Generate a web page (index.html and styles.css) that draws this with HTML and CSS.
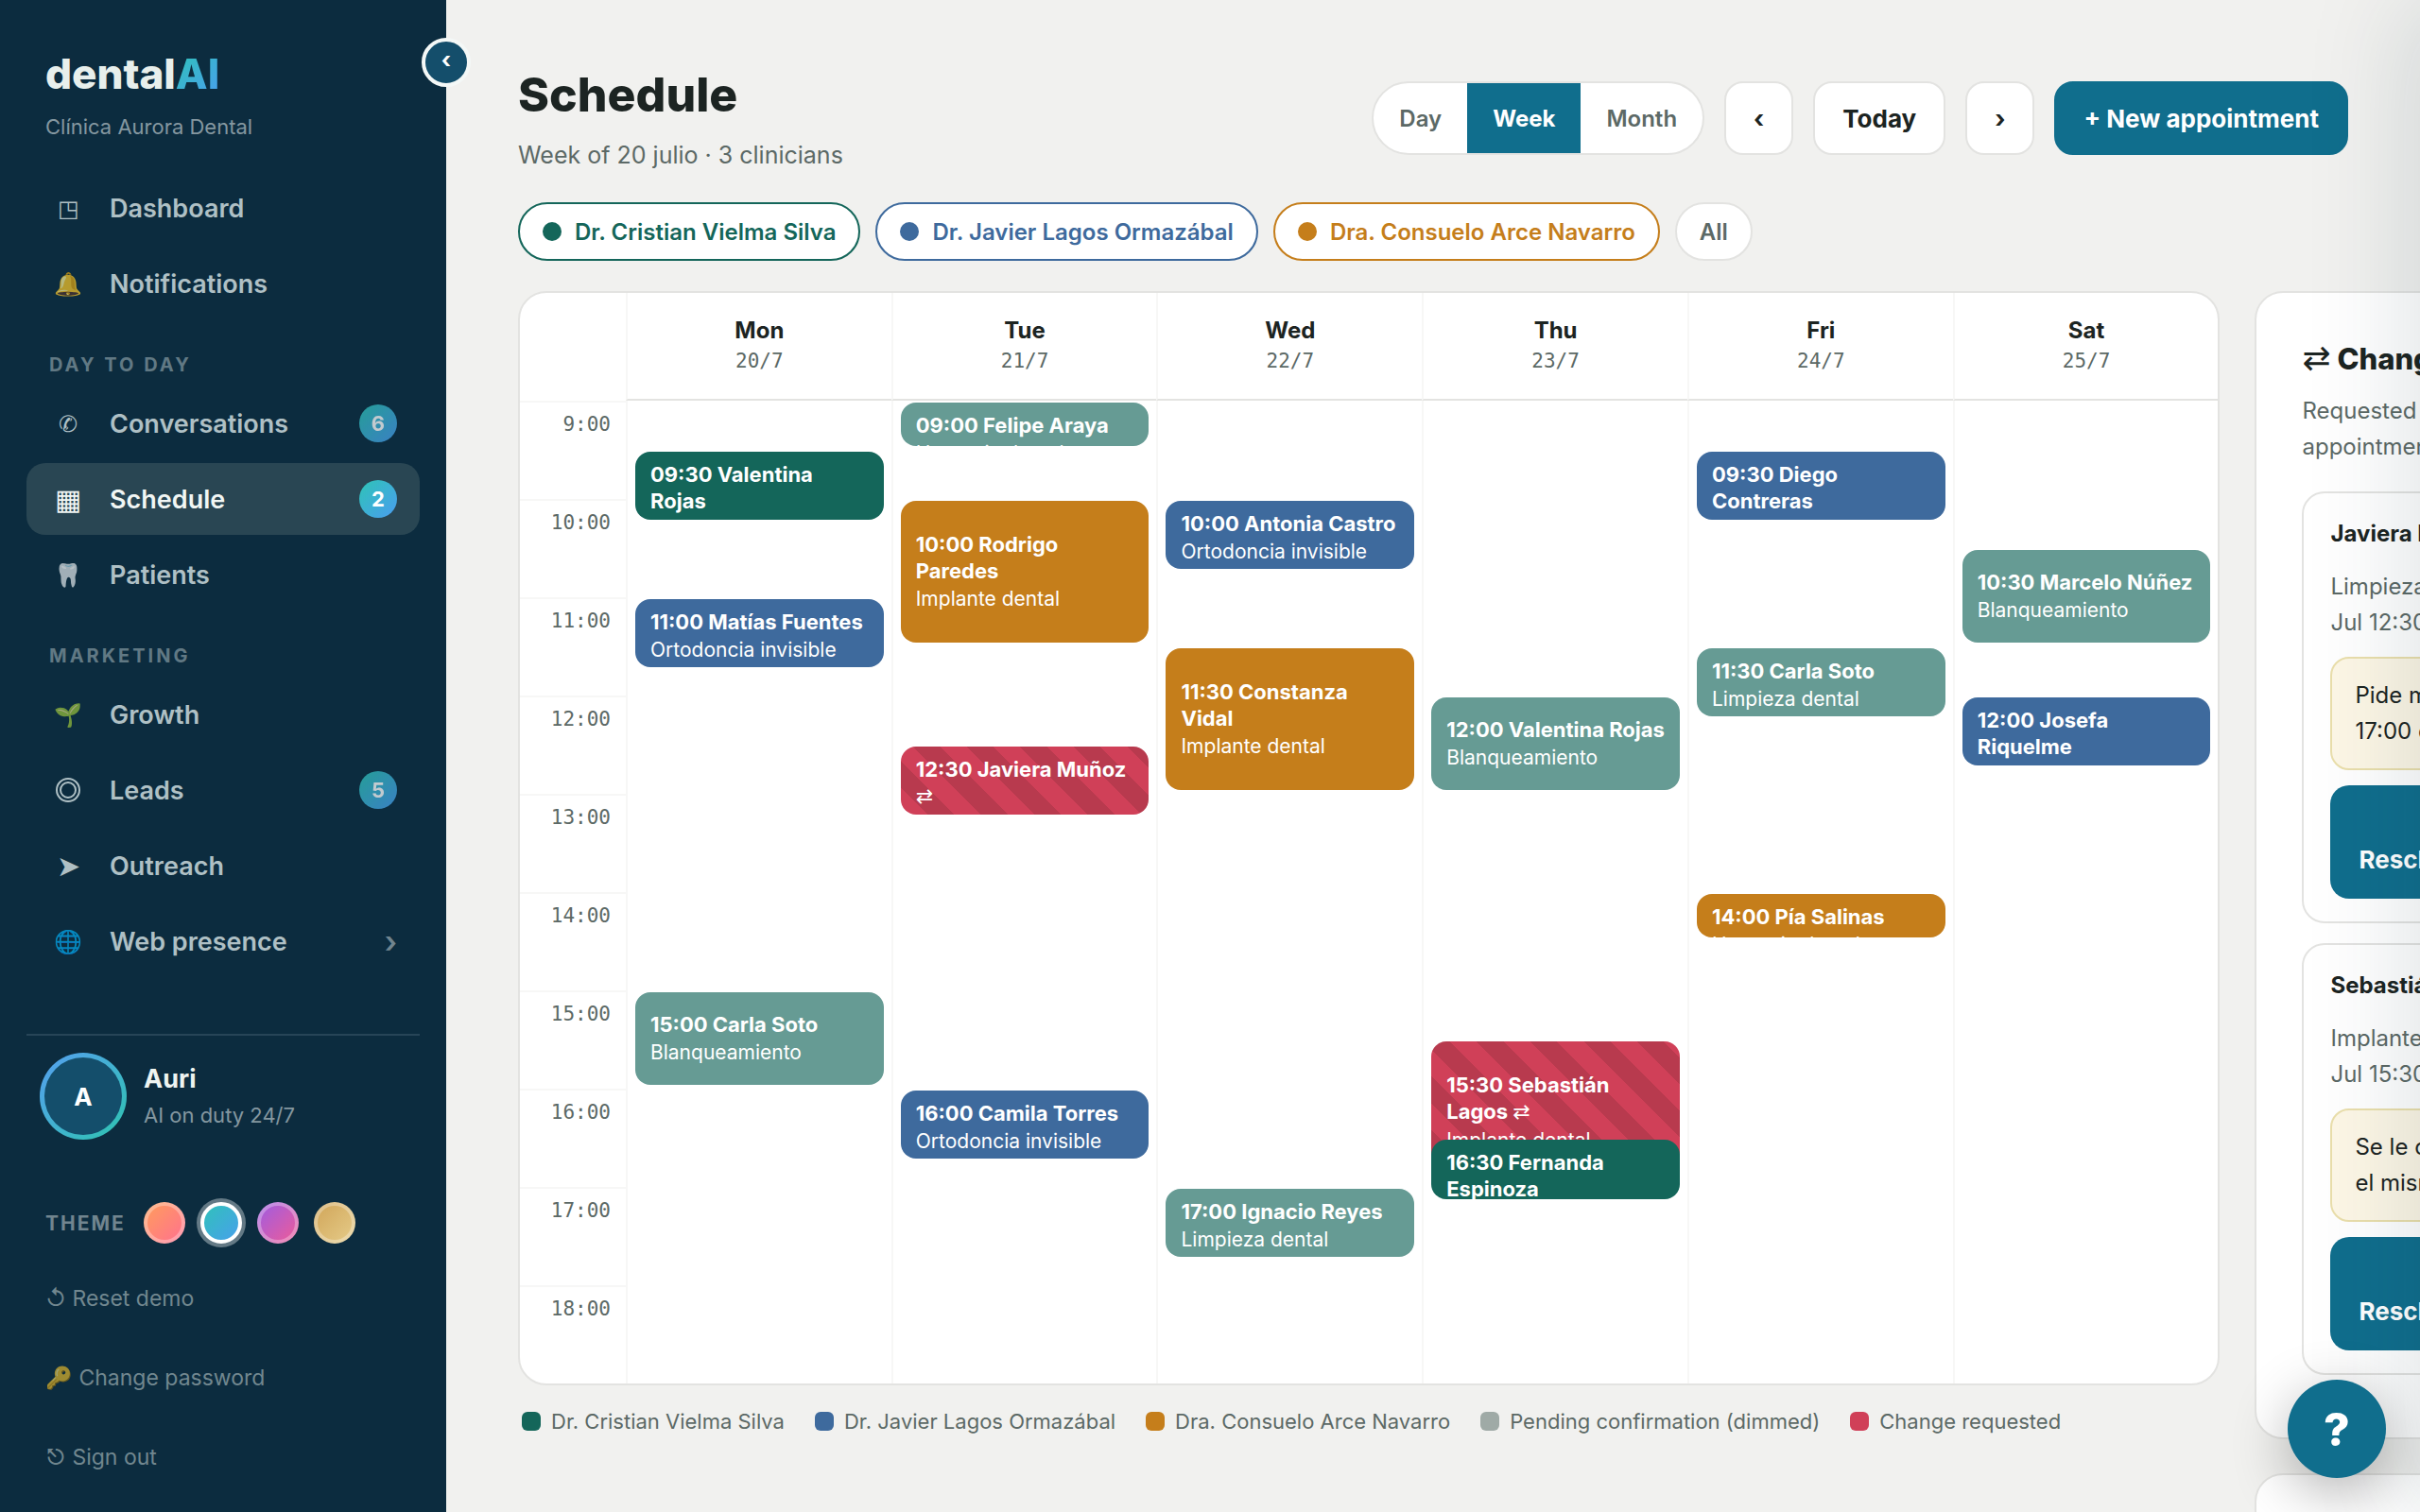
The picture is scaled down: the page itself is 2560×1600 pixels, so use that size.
FILE: index.html
```html
<!DOCTYPE html>
<html lang="en">
  <head>
    <meta charset="UTF-8" />
    <meta name="viewport" content="width=device-width, initial-scale=1.0" />
    <title>dentalAI - Schedule</title>
    <link rel="stylesheet" href="styles.css">
  </head>
  <body>
    <aside class="sidebar">
      <button class="collapse" type="button" aria-label="Collapse menu">‹</button>
      <div class="brand">dental<span>AI</span></div>
      <div class="clinic">Clínica Aurora Dental</div>

      <nav class="nav">
        <a class="nav-item" href="#"><span class="icon">◳</span>Dashboard</a>
        <a class="nav-item" href="#"><span class="icon emoji">🔔</span>Notifications</a>
        <div class="nav-label">Day to day</div>
        <a class="nav-item" href="#"><span class="icon">✆</span>Conversations<span class="badge">6</span></a>
        <a class="nav-item active" href="#"><span class="icon large">▦</span>Schedule<span class="badge">2</span></a>
        <a class="nav-item" href="#"><span class="icon emoji">🦷</span>Patients</a>
        <div class="nav-label">Marketing</div>
        <a class="nav-item" href="#"><span class="icon emoji">🌱</span>Growth</a>
        <a class="nav-item" href="#">
          <span class="icon">
            <svg width="28" height="28" viewBox="0 0 28 28" fill="none" stroke="currentColor" stroke-width="2">
              <circle cx="14" cy="14" r="12" />
              <circle cx="14" cy="14" r="8" />
            </svg>
          </span>Leads<span class="badge">5</span>
        </a>
        <a class="nav-item" href="#"><span class="icon large">➤</span>Outreach</a>
        <a class="nav-item" href="#"><span class="icon emoji">🌐</span>Web presence<span class="chevron">›</span></a>
      </nav>

      <div class="sidebar-footer">
        <div class="profile">
          <div class="avatar"><span>A</span></div>
          <div>
            <div class="profile-name">Auri</div>
            <div class="profile-status">AI on duty 24/7</div>
          </div>
        </div>
        <div class="themes">
          <span class="themes-label">Theme</span>
          <button class="swatch coral" type="button" aria-label="Coral"></button>
          <button class="swatch ocean selected" type="button" aria-label="Ocean"></button>
          <button class="swatch violet" type="button" aria-label="Violet"></button>
          <button class="swatch gold" type="button" aria-label="Gold"></button>
        </div>
        <a class="foot-link" href="#">↺ Reset demo</a>
        <a class="foot-link" href="#"><span class="key">🔑</span> Change password</a>
        <a class="foot-link" href="#">⎋ Sign out</a>
      </div>
    </aside>

    <main class="main">
      <header class="page-head">
        <div>
          <h1>Schedule</h1>
          <p class="subtitle">Week of 20 julio · 3 clinicians</p>
        </div>
        <div class="controls">
          <div class="segmented">
            <button type="button">Day</button>
            <button type="button" class="on">Week</button>
            <button type="button">Month</button>
          </div>
          <button class="btn" type="button" aria-label="Previous week">‹</button>
          <button class="btn" type="button">Today</button>
          <button class="btn" type="button" aria-label="Next week">›</button>
          <button class="btn primary" type="button">+ New appointment</button>
        </div>
      </header>

      <div class="filters">
        <button class="chip green" type="button"><i></i>Dr. Cristian Vielma Silva</button>
        <button class="chip blue" type="button"><i></i>Dr. Javier Lagos Ormazábal</button>
        <button class="chip orange" type="button"><i></i>Dra. Consuelo Arce Navarro</button>
        <button class="chip" type="button">All</button>
      </div>

      <div class="board">
        <section class="board-main">
          <div class="calendar">
            <div class="cal-row">
              <div></div>
              <div class="day-head"><b>Mon</b><span>20/7</span></div>
              <div class="day-head"><b>Tue</b><span>21/7</span></div>
              <div class="day-head"><b>Wed</b><span>22/7</span></div>
              <div class="day-head"><b>Thu</b><span>23/7</span></div>
              <div class="day-head"><b>Fri</b><span>24/7</span></div>
              <div class="day-head"><b>Sat</b><span>25/7</span></div>
            </div>
            <div class="cal-row">
              <div class="hours">
                <div>9:00</div>
                <div>10:00</div>
                <div>11:00</div>
                <div>12:00</div>
                <div>13:00</div>
                <div>14:00</div>
                <div>15:00</div>
                <div>16:00</div>
                <div>17:00</div>
                <div>18:00</div>
              </div>

              <!-- --start: five-minute line counted from 9:00, --len: five-minute steps -->
              <div class="day">
                <button class="event green" type="button" style="--start: 7; --len: 9"><b>09:30 Valentina Rojas</b><span>Limpieza dental</span></button>
                <button class="event blue" type="button" style="--start: 25; --len: 9"><b>11:00 Matías Fuentes</b><span>Ortodoncia invisible</span></button>
                <button class="event pending" type="button" style="--start: 73; --len: 12"><b>15:00 Carla Soto</b><span>Blanqueamiento</span></button>
              </div>
              <div class="day">
                <button class="event pending" type="button" style="--start: 1; --len: 6"><b>09:00 Felipe Araya</b><span>Urgencia dental</span></button>
                <button class="event orange" type="button" style="--start: 13; --len: 18"><b>10:00 Rodrigo Paredes</b><span>Implante dental</span></button>
                <button class="event change" type="button" style="--start: 43; --len: 9"><b>12:30 Javiera Muñoz <em>⇄</em></b><span>Limpieza dental</span></button>
                <button class="event blue" type="button" style="--start: 85; --len: 9"><b>16:00 Camila Torres</b><span>Ortodoncia invisible</span></button>
              </div>
              <div class="day">
                <button class="event blue" type="button" style="--start: 13; --len: 9"><b>10:00 Antonia Castro</b><span>Ortodoncia invisible</span></button>
                <button class="event orange" type="button" style="--start: 31; --len: 18"><b>11:30 Constanza Vidal</b><span>Implante dental</span></button>
                <button class="event pending" type="button" style="--start: 97; --len: 9"><b>17:00 Ignacio Reyes</b><span>Limpieza dental</span></button>
              </div>
              <div class="day">
                <button class="event pending" type="button" style="--start: 37; --len: 12"><b>12:00 Valentina Rojas</b><span>Blanqueamiento</span></button>
                <button class="event change" type="button" style="--start: 79; --len: 18"><b>15:30 Sebastián Lagos <em>⇄</em></b><span>Implante dental</span></button>
                <button class="event green" type="button" style="--start: 91; --len: 8"><b>16:30 Fernanda Espinoza</b><span>Control</span></button>
              </div>
              <div class="day">
                <button class="event blue" type="button" style="--start: 7; --len: 9"><b>09:30 Diego Contreras</b><span>Ortodoncia invisible</span></button>
                <button class="event pending" type="button" style="--start: 31; --len: 9"><b>11:30 Carla Soto</b><span>Limpieza dental</span></button>
                <button class="event orange" type="button" style="--start: 61; --len: 6"><b>14:00 Pía Salinas</b><span>Urgencia dental</span></button>
              </div>
              <div class="day">
                <button class="event pending" type="button" style="--start: 19; --len: 12"><b>10:30 Marcelo Núñez</b><span>Blanqueamiento</span></button>
                <button class="event blue" type="button" style="--start: 37; --len: 9"><b>12:00 Josefa Riquelme</b><span>Ortodoncia invisible</span></button>
              </div>
            </div>
          </div>
          <div class="legend">
            <span class="green"><i></i>Dr. Cristian Vielma Silva</span>
            <span class="blue"><i></i>Dr. Javier Lagos Ormazábal</span>
            <span class="orange"><i></i>Dra. Consuelo Arce Navarro</span>
            <span class="dimmed"><i></i>Pending confirmation (dimmed)</span>
            <span class="red"><i></i>Change requested</span>
          </div>
        </section>

        <aside class="side">
          <section class="panel">
            <h2><em>⇄</em> Changes</h2>
            <p class="panel-intro">Requested by patients for appointments this week.</p>
            <article class="request">
              <h3>Javiera Muñoz</h3>
              <p>Limpieza dental · 21<br>Jul 12:30</p>
              <p class="note">Pide mover a las<br>17:00 del jueves</p>
              <button class="request-btn" type="button">✓<br>Reschedule</button>
            </article>
            <article class="request">
              <h3>Sebastián Lagos</h3>
              <p>Implante dental · 23<br>Jul 15:30</p>
              <p class="note">Se le complica,<br>el mismo día</p>
              <button class="request-btn" type="button">✓<br>Reschedule</button>
            </article>
          </section>
          <section class="panel"></section>
        </aside>
      </div>
    </main>

    <div class="drawer"></div>
    <button class="help" type="button" aria-label="Help">?</button>
  </body>
</html>
```
FILE: styles.css
```css
:root {
  --navy: #0c2c3f;
  --accent: #106e8d;
  --ink: #1c2422;
  --muted: #5c6966;
  --line: #e3e3e1;
  --hair: #f7f7f6;
  --page: #f1f1ef;
  --green: #14665a;
  --blue: #3e6a9d;
  --orange: #c57e1b;
  --pending: #669b94;
  --red: #d04058;
  --tide: linear-gradient(135deg, #2ec4b6, #4a9df0);
}

* {
  box-sizing: border-box;
}
html, body {
  height: 100%;
  margin: 0;
}
body {
  display: flex;
  overflow: hidden;
  background: var(--page);
  color: var(--ink);
  font-family: Inter, sans-serif;
  font-size: 24px;
}
button {
  font-family: inherit;
  cursor: pointer;
}
a {
  text-decoration: none;
}
h1, h2, h3, p {
  margin: 0;
}
em {
  font-family: "DejaVu Sans", sans-serif;
  font-style: normal;
  font-weight: 400;
}

/* sidebar */
.sidebar {
  position: relative;
  z-index: 2;
  display: flex;
  flex-direction: column;
  flex: 0 0 472px;
  padding: 54px 28px 16px;
  background: var(--navy);
}
.collapse {
  position: absolute;
  top: 40px;
  right: -26px;
  width: 52px;
  height: 52px;
  padding: 0 0 4px;
  border: 4px solid #f4f8f7;
  border-radius: 50%;
  background: #144e6b;
  color: #fff;
  font-size: 24px;
  font-weight: 700;
  line-height: 1;
}
.brand {
  padding-left: 20px;
  color: #e8efec;
  font-size: 44px;
  font-weight: 800;
  line-height: 48px;
}
.brand span {
  background: var(--tide);
  background-clip: text;
  color: transparent;
}
.clinic {
  margin-top: 16px;
  padding-left: 20px;
  color: #8497a0;
  font-size: 22px;
  line-height: 32px;
}
.nav {
  display: flex;
  flex-direction: column;
  gap: 4px;
  margin-top: 32px;
}
.nav-item {
  display: flex;
  align-items: center;
  height: 76px;
  padding: 0 24px 0 20px;
  border-radius: 20px;
  color: #afc0c5;
  font-size: 27px;
  font-weight: 600;
}
.nav-item.active {
  background: #294653;
  color: #f1f6f4;
}
.icon {
  display: flex;
  justify-content: center;
  width: 48px;
  margin-right: 20px;
  font-size: 24px;
  font-weight: 400;
}
.icon.large {
  font-size: 30px;
}
.emoji {
  opacity: 0.7;
}
.badge {
  display: grid;
  place-items: center;
  width: 40px;
  height: 40px;
  margin-left: auto;
  border-radius: 50%;
  background: var(--tide);
  color: #fff;
  font-size: 22px;
  font-weight: 700;
  opacity: 0.75;
}
.active .badge {
  opacity: 1;
}
.chevron {
  margin-left: auto;
  color: #71858f;
  font-size: 32px;
}
.nav-label {
  padding: 32px 24px 8px;
  color: #617984;
  font-size: 20px;
  font-weight: 700;
  line-height: 24px;
  letter-spacing: 3px;
  text-transform: uppercase;
}
.sidebar-footer {
  margin-top: auto;
  border-top: 2px solid #274557;
  padding-top: 18px;
}
.profile {
  display: flex;
  align-items: center;
  gap: 18px;
  padding-left: 14px;
}
.avatar {
  width: 92px;
  height: 92px;
  padding: 5px;
  border-radius: 50%;
  background: linear-gradient(135deg, #569ff0, #2ec4b0);
}
.avatar span {
  display: grid;
  place-items: center;
  height: 100%;
  border-radius: 50%;
  background: #144e6b;
  color: #fff;
  font-size: 26px;
  font-weight: 700;
}
.profile-name {
  color: #eef4f1;
  font-size: 27px;
  font-weight: 700;
  line-height: 40px;
}
.profile-status {
  color: #8497a0;
  font-size: 22px;
  line-height: 36px;
}
.themes {
  display: flex;
  align-items: center;
  gap: 16px;
  height: 52px;
  margin: 62px 0 12px;
  padding-left: 20px;
}
.themes-label {
  width: 88px;
  color: #71858f;
  font-size: 21px;
  font-weight: 700;
  letter-spacing: 2px;
  text-transform: uppercase;
}
.swatch {
  width: 44px;
  height: 44px;
  padding: 0;
  border: 4px solid rgba(255, 255, 255, 0.3);
  border-radius: 50%;
  background-origin: border-box;
}
.swatch.selected {
  border-color: #fff;
  box-shadow: 0 0 0 4px #637985;
}
.coral { background-image: linear-gradient(135deg, #ff9f5a, #ff6f91); }
.ocean { background-image: var(--tide); }
.violet { background-image: linear-gradient(135deg, #9b5de5, #f15b95); }
.gold { background-image: linear-gradient(135deg, #d0a457, #e6cd8b); }
.foot-link {
  display: flex;
  align-items: center;
  height: 84px;
  padding-left: 20px;
  color: #71878f;
  font-size: 23px;
  white-space: pre;
}
.key {
  opacity: 0.6;
}

/* page header */
.main {
  flex: 1;
  min-width: 0;
  padding: 70px 76px 0;
}
.page-head {
  display: flex;
  align-items: flex-start;
  justify-content: space-between;
}
h1 {
  font-size: 50px;
  font-weight: 800;
  line-height: 60px;
}
.subtitle {
  margin-top: 14px;
  color: var(--muted);
  font-size: 25px;
  line-height: 40px;
}
.controls {
  display: flex;
  gap: 21px;
  padding-top: 16px;
}
.segmented {
  display: flex;
  overflow: hidden;
  border: 2px solid var(--line);
  border-radius: 40px;
  background: #fff;
}
.segmented button {
  padding: 0 27px;
  border: 0;
  background: none;
  color: var(--muted);
  font-size: 24px;
  font-weight: 600;
}
.segmented .on {
  background: var(--accent);
  color: #fff;
  font-weight: 700;
}
.btn {
  height: 78px;
  padding: 0 29px;
  border: 2px solid var(--line);
  border-radius: 20px;
  background: #fff;
  color: var(--ink);
  font-size: 26px;
  font-weight: 700;
}
.btn.primary {
  border-color: var(--accent);
  background: var(--accent);
  color: #fff;
}

.filters {
  display: flex;
  gap: 16px;
  margin: 30px 0 32px;
}
.chip {
  display: flex;
  align-items: center;
  gap: 14px;
  height: 62px;
  padding: 0 24px;
  border: 2px solid var(--line);
  border-radius: 31px;
  background: #fff;
  color: var(--muted);
  font-size: 24px;
  font-weight: 600;
}
.chip i {
  width: 20px;
  height: 20px;
  border-radius: 50%;
  background: currentColor;
}
.chip.green { border-color: var(--green); color: var(--green); }
.chip.blue { border-color: var(--blue); color: var(--blue); }
.chip.orange { border-color: var(--orange); color: var(--orange); }

/* calendar */
.board {
  display: flex;
  gap: 37px;
}
.board-main {
  flex: 0 0 93%;
}
.calendar {
  overflow: hidden;
  border: 2px solid var(--line);
  border-radius: 30px;
  background: #fff;
}
.cal-row {
  display: grid;
  grid-template-columns: 112px repeat(6, minmax(0, 1fr));
}
.day-head {
  display: flex;
  flex-direction: column;
  align-items: center;
  padding: 24px 0;
  border-bottom: 2px solid var(--line);
  border-left: 2px solid var(--hair);
  line-height: 32px;
}
.day-head span {
  color: var(--muted);
  font-family: "DejaVu Sans Mono", monospace;
  font-size: 21px;
}
.hours div {
  height: 104px;
  padding: 8px 16px 0 0;
  border-top: 2px solid var(--hair);
  color: var(--muted);
  font-family: "DejaVu Sans Mono", monospace;
  font-size: 21px;
  line-height: 30px;
  text-align: right;
}
/* ten hours, 104px each, split in five-minute rows */
.day {
  display: grid;
  grid-template-columns: minmax(0, 1fr);
  grid-template-rows: repeat(120, minmax(0, 1fr));
  height: 1040px;
  border-left: 2px solid var(--hair);
}
.event {
  display: flex;
  flex-direction: column;
  justify-content: safe center;
  gap: 2px;
  grid-column: 1;
  grid-row: var(--start) / span var(--len);
  overflow: hidden;
  min-height: 0;
  margin: 2px 8px 4px;
  padding: 10px 12px 10px 16px;
  border: 0;
  border-radius: 16px;
  color: #fff;
  font-size: 21px;
  line-height: 28px;
  text-align: left;
}
.event b {
  font-size: 22px;
}
.event.green { background: var(--green); }
.event.blue { background: var(--blue); }
.event.orange { background: var(--orange); }
.event.pending { background: var(--pending); }
.event.change {
  background: repeating-linear-gradient(45deg, var(--red) 0 20px, #b83a4e 20px 40px);
}

.legend {
  display: flex;
  gap: 32px;
  margin-top: 24px;
  padding-left: 4px;
  color: var(--muted);
  font-size: 22px;
  line-height: 28px;
}
.legend span {
  display: flex;
  align-items: center;
  gap: 11px;
}
.legend i {
  width: 20px;
  height: 20px;
  border-radius: 6px;
  background: var(--green);
}
.legend .blue i { background: var(--blue); }
.legend .orange i { background: var(--orange); }
.legend .dimmed i { background: #9faaa6; }
.legend .red i { background: var(--red); }

/* change requests */
.side {
  display: flex;
  flex: 0 0 440px;
  flex-direction: column;
  gap: 36px;
}
.panel {
  min-height: 200px;
  padding: 48px 48px 66px;
  border: 2px solid var(--line);
  border-radius: 30px;
  background: #fff;
}
.panel h2 {
  font-size: 31px;
  font-weight: 800;
  line-height: 44px;
}
.panel h2 em {
  font-size: 36px;
  line-height: 1;
}
.panel-intro {
  margin: 14px 0 28px;
  color: var(--muted);
  line-height: 38px;
}
.request {
  margin-bottom: 21px;
  padding: 24px 28px;
  border: 2px solid var(--line);
  border-radius: 24px;
  color: var(--muted);
  line-height: 38px;
}
.request:last-child {
  margin-bottom: 0;
}
.request h3 {
  margin-bottom: 18px;
  color: var(--ink);
  font-size: 24px;
}
.request .note {
  margin: 17px 0 16px;
  padding: 20px 24px;
  border: 2px solid #eadfac;
  border-radius: 20px;
  background: #fdf7e6;
  color: var(--ink);
}
.request-btn {
  display: block;
  height: 120px;
  padding: 0 30px;
  border: 0;
  border-radius: 20px;
  background: var(--accent);
  color: #fff;
  font-size: 26px;
  font-weight: 700;
  line-height: 38px;
}

/* closed drawer waits past the right edge, only its shadow shows */
.drawer {
  position: fixed;
  top: 0;
  right: -400px;
  z-index: 3;
  width: 400px;
  height: 100%;
  background: #fff;
  box-shadow: -16px 0 100px rgba(15, 45, 60, 0.13);
}
.help {
  position: fixed;
  right: 36px;
  bottom: 36px;
  z-index: 4;
  width: 104px;
  height: 104px;
  border: 0;
  border-radius: 50%;
  background: var(--accent);
  color: #fff;
  font-size: 48px;
  font-weight: 800;
  box-shadow: 0 16px 60px rgba(0, 0, 0, 0.3);
}
```
